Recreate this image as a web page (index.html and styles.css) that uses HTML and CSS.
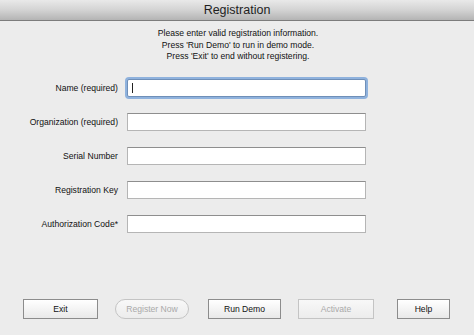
FILE: index.html
```html
<!DOCTYPE html>
<html lang="en">
<head>
    <meta charset="UTF-8">
    <title>Registration</title>
    <link rel="stylesheet" href="styles.css">
</head>
<body>
    <div class="window">
        <div class="titlebar">Registration</div>
        <div class="intro">
            <p>Please enter valid registration information.</p>
            <p>Press 'Run Demo' to run in demo mode.</p>
            <p>Press 'Exit' to end without registering.</p>
        </div>
        <form class="fields">
            <label for="name">Name (required)</label>
            <div class="field focused"><input type="text" id="name"><span class="caret"></span></div>
            <label for="org">Organization (required)</label>
            <div class="field"><input type="text" id="org"></div>
            <label for="serial">Serial Number</label>
            <div class="field"><input type="text" id="serial"></div>
            <label for="regkey">Registration Key</label>
            <div class="field"><input type="text" id="regkey"></div>
            <label for="auth">Authorization Code*</label>
            <div class="field"><input type="text" id="auth"></div>
        </form>
        <div class="buttons">
            <button class="btn btn-exit">Exit</button>
            <button class="btn btn-round btn-register" disabled>Register Now</button>
            <button class="btn btn-demo">Run Demo</button>
            <button class="btn btn-activate" disabled>Activate</button>
            <button class="btn btn-help">Help</button>
        </div>
    </div>
</body>
</html>
```

FILE: styles.css
```css
*
{
    box-sizing: border-box;
}
body
{
    margin: 0;
    background: #ececec;
    font-family: "Liberation Sans", Arial, sans-serif;
    overflow: hidden;
}
.window
{
    width: 474px;
    height: 335px;
    background: #ececec;
    display: flex;
    flex-direction: column;
}
.titlebar
{
    height: 21px;
    line-height: 20px;
    text-align: center;
    font-size: 12.5px;
    color: #1e1e1e;
    background: linear-gradient(#e9e9e9 0%, #d3d3d3 50%, #b4b4b4 100%);
    border-bottom: 1px solid #7c7c7c;
}
.intro
{
    margin-top: 7px;
    padding-left: 2px;
    text-align: center;
    font-size: 8.6px;
    color: #111;
}
.intro p
{
    margin: 0;
    line-height: 11.5px;
}
.fields
{
    display: grid;
    grid-template-columns: 118px 239px;
    column-gap: 9px;
    row-gap: 16px;
    margin-top: 16px;
}
.fields label
{
    text-align: right;
    font-size: 8.6px;
    color: #111;
    align-self: center;
}
.field
{
    position: relative;
    height: 18px;
}
.field input
{
    width: 100%;
    height: 18px;
    margin: 0;
    border: 1px solid #b5b5b5;
    border-top-color: #8e8e8e;
    background: #fff;
    outline: none;
    padding: 0 3px;
}
.field.focused input
{
    border-color: #6f8fb8;
    box-shadow: 0 0 0 2px #8fb2dd;
    border-radius: 2px;
}
.caret
{
    position: absolute;
    left: 5px;
    top: 4px;
    width: 1px;
    height: 10px;
    background: #222;
}
.buttons
{
    display: flex;
    margin-top: 66px;
    padding-left: 23px;
}
.btn
{
    height: 20px;
    margin: 0;
    padding: 0;
    font-family: inherit;
    font-size: 8.6px;
    color: #111;
    background: linear-gradient(#ffffff 0%, #f4f4f4 50%, #e9e9e9 100%);
    border: 1px solid #8c8c8c;
    border-radius: 0;
}
.btn:disabled
{
    color: #a9a9a9;
    border-color: #c4c4c4;
    background: linear-gradient(#f8f8f8, #ececec);
}
.btn-round
{
    border-radius: 10px;
}
.btn-exit
{
    width: 75px;
}
.btn-register
{
    width: 74px;
    margin-left: 17px;
}
.btn-demo
{
    width: 73px;
    margin-left: 19px;
}
.btn-activate
{
    width: 76px;
    margin-left: 17px;
}
.btn-help
{
    width: 53px;
    margin-left: 23px;
}
```
